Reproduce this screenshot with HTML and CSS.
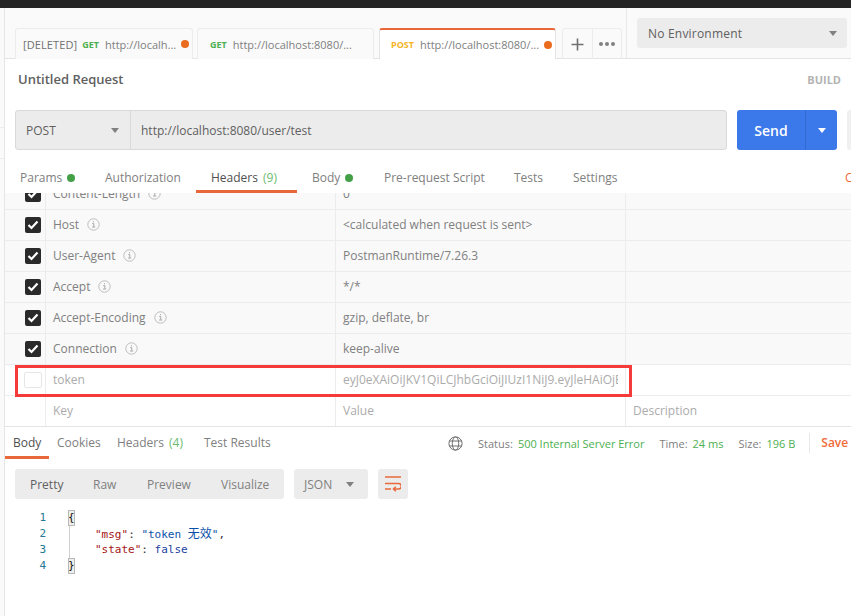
FILE: index.html
```html
<!DOCTYPE html>
<html lang="en">
<head>
<meta charset="utf-8">
<title>Postman</title>
<link rel="stylesheet" href="styles.css">
</head>
<body>
<div class="app">
  <div class="topbar"></div>
  <div class="workspace">
    <aside class="rail"><i class="rail-line one"></i><i class="rail-line two"></i></aside>
    <main class="main">
      <header class="tabstrip">
        <div class="tabs">
          <div class="tab t1"><span class="deleted">[DELETED]</span><b class="get">GET</b><span class="turl">http://localh...</span><i class="dot"></i></div>
          <div class="tab t2"><b class="get">GET</b><span class="turl">http://localhost:8080/...</span></div>
          <div class="tab t3 active"><b class="post">POST</b><span class="turl">http://localhost:8080/...</span><i class="dot"></i></div>
          <div class="tabtools">
            <div class="tool plus"><svg width="13" height="13" viewBox="0 0 13 13"><path d="M6.500 0.500v12M0.500 6.500h12" stroke="#707070" stroke-width="1.600" fill="none"/></svg></div>
            <div class="tool more"><i></i><i></i><i></i></div>
          </div>
        </div>
        <div class="envwrap">
          <div class="env"><span>No Environment</span><i class="caret"></i></div>
        </div>
      </header>

      <div class="titlerow"><span class="rtitle">Untitled Request</span><span class="build">BUILD</span></div>

      <div class="urlrow">
        <div class="urlbox">
          <div class="method"><span>POST</span><i class="caret"></i></div>
          <div class="url">http://localhost:8080/user/test</div>
        </div>
        <div class="send"><span class="sendlabel">Send</span><span class="sendmenu"><i class="caret white"></i></span></div>
        <div class="savestub"></div>
      </div>

      <nav class="reqtabs">
        <span class="rt r1">Params<i class="gdot"></i></span>
        <span class="rt r2">Authorization</span>
        <span class="rt r3 on">Headers <em>(9)</em></span>
        <span class="rt r4">Body<i class="gdot"></i></span>
        <span class="rt r5">Pre-request Script</span>
        <span class="rt r6">Tests</span>
        <span class="rt r7">Settings</span>
        <span class="rt r8">Cookies</span>
      </nav>

      <section class="tablewrap">
        <div class="table">
          <div class="row"><div class="c ck"><i class="box on"><svg width="12" height="10" viewBox="0 0 12 10"><path d="M1.500 5l3 3 6-6.500" stroke="#fff" stroke-width="2.200" fill="none"/></svg></i></div><div class="c key">Content-Length<svg class="info" width="13" height="13" viewBox="0 0 13 13"><circle cx="6.500" cy="6.500" r="5.700" fill="none" stroke="#bdbdbd"/><path d="M5.200 5.600h1.600v3.200M5 9h3.200M6.500 3.200v1.100" fill="none" stroke="#a8a8a8"/></svg></div><div class="c val">0</div><div class="c desc"></div></div>
          <div class="row"><div class="c ck"><i class="box on"><svg width="12" height="10" viewBox="0 0 12 10"><path d="M1.500 5l3 3 6-6.500" stroke="#fff" stroke-width="2.200" fill="none"/></svg></i></div><div class="c key">Host<svg class="info" width="13" height="13" viewBox="0 0 13 13"><circle cx="6.500" cy="6.500" r="5.700" fill="none" stroke="#bdbdbd"/><path d="M5.200 5.600h1.600v3.200M5 9h3.200M6.500 3.200v1.100" fill="none" stroke="#a8a8a8"/></svg></div><div class="c val">&lt;calculated when request is sent&gt;</div><div class="c desc"></div></div>
          <div class="row"><div class="c ck"><i class="box on"><svg width="12" height="10" viewBox="0 0 12 10"><path d="M1.500 5l3 3 6-6.500" stroke="#fff" stroke-width="2.200" fill="none"/></svg></i></div><div class="c key">User-Agent<svg class="info" width="13" height="13" viewBox="0 0 13 13"><circle cx="6.500" cy="6.500" r="5.700" fill="none" stroke="#bdbdbd"/><path d="M5.200 5.600h1.600v3.200M5 9h3.200M6.500 3.200v1.100" fill="none" stroke="#a8a8a8"/></svg></div><div class="c val">PostmanRuntime/7.26.3</div><div class="c desc"></div></div>
          <div class="row"><div class="c ck"><i class="box on"><svg width="12" height="10" viewBox="0 0 12 10"><path d="M1.500 5l3 3 6-6.500" stroke="#fff" stroke-width="2.200" fill="none"/></svg></i></div><div class="c key">Accept<svg class="info" width="13" height="13" viewBox="0 0 13 13"><circle cx="6.500" cy="6.500" r="5.700" fill="none" stroke="#bdbdbd"/><path d="M5.200 5.600h1.600v3.200M5 9h3.200M6.500 3.200v1.100" fill="none" stroke="#a8a8a8"/></svg></div><div class="c val">*/*</div><div class="c desc"></div></div>
          <div class="row"><div class="c ck"><i class="box on"><svg width="12" height="10" viewBox="0 0 12 10"><path d="M1.500 5l3 3 6-6.500" stroke="#fff" stroke-width="2.200" fill="none"/></svg></i></div><div class="c key">Accept-Encoding<svg class="info" width="13" height="13" viewBox="0 0 13 13"><circle cx="6.500" cy="6.500" r="5.700" fill="none" stroke="#bdbdbd"/><path d="M5.200 5.600h1.600v3.200M5 9h3.200M6.500 3.200v1.100" fill="none" stroke="#a8a8a8"/></svg></div><div class="c val">gzip, deflate, br</div><div class="c desc"></div></div>
          <div class="row"><div class="c ck"><i class="box on"><svg width="12" height="10" viewBox="0 0 12 10"><path d="M1.500 5l3 3 6-6.500" stroke="#fff" stroke-width="2.200" fill="none"/></svg></i></div><div class="c key">Connection<svg class="info" width="13" height="13" viewBox="0 0 13 13"><circle cx="6.500" cy="6.500" r="5.700" fill="none" stroke="#bdbdbd"/><path d="M5.200 5.600h1.600v3.200M5 9h3.200M6.500 3.200v1.100" fill="none" stroke="#a8a8a8"/></svg></div><div class="c val">keep-alive</div><div class="c desc"></div></div>
          <div class="row off"><div class="c ck"><i class="box"></i></div><div class="c key">token</div><div class="c val"><span class="clip">eyJ0eXAiOiJKV1QiLCJhbGciOiJIUzI1NiJ9.eyJleHAiOjE2MDA</span></div><div class="c desc"></div></div>
          <div class="row off"><div class="c ck"></div><div class="c key">Key</div><div class="c val">Value</div><div class="c desc">Description</div></div>
        </div>
        <div class="redbox"></div>
      </section>

      <div class="resbar">
        <nav class="restabs">
          <span class="st s1 on">Body</span>
          <span class="st s2">Cookies</span>
          <span class="st s3">Headers <em>(4)</em></span>
          <span class="st s4">Test Results</span>
        </nav>
        <div class="meta">
          <svg class="globe" width="15" height="15" viewBox="0 0 15 15"><g fill="none" stroke="#707070"><circle cx="7.500" cy="7.500" r="6.600"/><ellipse cx="7.500" cy="7.500" rx="3.200" ry="6.600"/><path d="M1.300 5h12.400M1.300 10h12.400"/></g></svg>
          <span class="ml st1">Status:</span><span class="mv">500 Internal Server Error</span>
          <span class="ml st2">Time:</span><span class="mv">24 ms</span>
          <span class="ml st3">Size:</span><span class="mv">196 B</span>
          <span class="save">Save</span>
        </div>
      </div>

      <div class="restools">
        <div class="modes"><span class="m1 cur">Pretty</span><span class="m2">Raw</span><span class="m3">Preview</span><span class="m4">Visualize</span></div>
        <div class="lang"><span>JSON</span><i class="caret"></i></div>
        <div class="wrapbtn"><svg width="16" height="16" viewBox="0 0 16 16"><g fill="none" stroke="#e8683a" stroke-width="1.500"><path d="M0 1h16M0 7.500h13.500a2.300 2.300 0 0 1 0 5.500H8.500"/><path d="M0 13h6M10.800 10.800L8.500 13l2.300 2.300"/></g></svg></div>
      </div>

      <div class="code">
        <div class="gutter"><span>1</span><span>2</span><span>3</span><span>4</span></div>
        <div class="lines">
          <div class="ln"><span class="br">{</span></div>
          <div class="ln in"><span class="k">"msg"</span>: <span class="s">"token <span class="cjk">无效</span>"</span>,</div>
          <div class="ln in"><span class="k">"state"</span>: <span class="b">false</span></div>
          <div class="ln"><span class="br">}</span></div>
        </div>
      </div>
    </main>
  </div>
</div>
</body>
</html>
```

FILE: styles.css
```css
* { box-sizing: border-box; }
html, body { margin: 0; height: 100%; overflow: hidden; background: #fff; }
body { font-family: "Open Sans", "Noto Sans CJK SC", sans-serif; font-size: 12px; color: #808080; }
i, em { font-style: normal; }
.app { width: 851px; height: 616px; display: flex; flex-direction: column; overflow: hidden; }
.topbar { height: 8px; background: #242424; flex: none; }
.workspace { flex: 1; display: flex; min-height: 0; }
.rail { width: 5px; flex: none; border-right: 1px solid #e6e6e6; background: #fafafa; position: relative; }
.rail-line { position: absolute; left: 0; width: 4px; height: 1px; background: #ececec; }
.rail-line.one { top: 119px; }
.rail-line.two { top: 150px; }
.main { width: 846px; flex: none; min-width: 0; overflow: hidden; }

.tabstrip { height: 51px; background: #fafafa; border-bottom: 1px solid #e4e4e4; display: flex; }
.tabs { width: 621px; flex: none; padding: 20px 0 0 10px; display: flex; align-items: flex-start; }
.tab { height: 31px; background: #fafafa; border: 1px solid #ececec; border-bottom: 0; border-radius: 3px 3px 0 0; display: flex; align-items: center; white-space: nowrap; font-size: 11px; flex: none; }
.t1 { width: 178px; padding-left: 7px; }
.t2 { width: 177px; margin-left: 4px; padding-left: 12px; }
.t3 { width: 177px; margin-left: 5px; padding-left: 11px; background: #fff; border-color: #e4e4e4; border-top: 2px solid #e8683a; position: relative; }
.deleted { color: #707070; letter-spacing: .1px; }
.tab b { font-size: 9px; font-weight: 700; margin: 0 6px 0 5px; }
.t2 b, .t3 b { margin-left: 0; }
.get { color: #4caf50; }
.post { color: #f5b324; }
.turl { color: #808080; }
.dot { width: 8px; height: 8px; border-radius: 50%; background: #ea6d1f; margin-left: 5px; }
.tabtools { display: flex; margin-left: 6px; height: 31px; width: 60px; border: 1px solid #ececec; border-bottom: 0; border-radius: 3px 3px 0 0; }
.tool { flex: 1; display: flex; align-items: center; justify-content: center; gap: 2px; }
.plus { border-right: 1px solid #ececec; flex: none; width: 30px; }
.more i { width: 4px; height: 4px; border-radius: 50%; background: #808080; }
.envwrap { flex: 1; border-left: 1px solid #e8e8e8; padding: 10px 0 0 10px; }
.env { width: 210px; height: 30px; background: #ececec; border-radius: 3px; display: flex; align-items: center; justify-content: space-between; padding: 0 10px 0 11px; color: #606060; font-size: 12px; letter-spacing: .2px; }
.env span { font-weight: 500; }
.caret { width: 0; height: 0; border-left: 4px solid transparent; border-right: 4px solid transparent; border-top: 5px solid #808080; display: block; flex: none; }
.caret.white { border-top-color: #fff; }

.titlerow { height: 51px; display: flex; justify-content: space-between; align-items: flex-start; padding: 10px 10px 0 13px; }
.rtitle { font-size: 13px; font-weight: 600; color: #606060; line-height: 20px; }
.build { font-size: 11px; font-weight: 700; color: #b3b3b3; line-height: 22px; }

.urlrow { display: flex; padding-left: 10px; height: 40px; }
.urlbox { width: 712px; flex: none; height: 40px; background: #ececec; border: 1px solid #d9d9d9; border-radius: 3px; display: flex; align-items: center; color: #606060; }
.method { width: 115px; height: 38px; border-right: 1px solid #d9d9d9; display: flex; align-items: center; justify-content: space-between; padding: 0 11px 0 10px; font-size: 12px; font-weight: 500; }
.url { padding-left: 10px; font-size: 12px; }
.send { width: 100px; flex: none; margin-left: 10px; background: #3b78ea; border-radius: 3px; color: #fff; display: flex; font-weight: 600; font-size: 14px; }
.sendlabel { width: 69px; display: flex; align-items: center; justify-content: center; border-right: 1px solid #336bd2; }
.sendmenu { flex: 1; display: flex; align-items: center; justify-content: center; }
.savestub { width: 20px; flex: none; margin-left: 10px; background: #f0f0f0; border-radius: 3px 0 0 3px; }

.reqtabs { height: 43px; position: relative; white-space: nowrap; }
.rt { position: absolute; top: 19px; line-height: 18px; display: flex; align-items: center; }
.r1 { left: 15px; } .r2 { left: 100px; } .r3 { left: 206px; color: #505050; white-space: pre; } .r4 { left: 307px; }
.r5 { left: 379px; } .r6 { left: 509px; } .r7 { left: 568px; } .r8 { left: 840px; color: #f26b3a; }
.rt em, .st em { color: #6cbb70; margin-left: 2px; }
.gdot { width: 8px; height: 8px; border-radius: 50%; background: #43a047; margin-left: 5px; }
.r3::after { content: ""; position: absolute; left: -15px; width: 101px; height: 3px; bottom: -6px; background: #e8683a; }

.tablewrap { height: 234px; overflow: hidden; position: relative; background: #fff; }
.table { margin-top: -14px; border-bottom: 1px solid #e4e4e4; }
.row { height: 31px; display: grid; grid-template-columns: 41px 290px 290px 1fr; background: #f9f9f9; border-bottom: 1px solid #ececec; color: #808080; }
.row.off { background: #fff; color: #ababab; }
.row:last-child { border-bottom: 0; height: 30px; }
.c { display: flex; align-items: center; padding: 0 0 2px 7px; border-right: 1px solid #ececec; min-width: 0; white-space: nowrap; }
.ck { padding: 0 0 0 20px; }
.desc { border-right: 0; }
.box { width: 16px; height: 16px; border-radius: 2px; background: #2a2a2a; display: flex; align-items: center; justify-content: center; }
.row.off .box { background: #fff; border: 1px solid #e6e6e6; width: 18px; height: 16px; margin-left: -1px; }
.info { margin-left: 8px; }
.clip { overflow: hidden; width: 275px; display: block; }
.redbox { position: absolute; left: 10px; top: 172px; width: 617px; height: 32px; border: 3px solid #f53a3a; pointer-events: none; }

.resbar { height: 32px; display: flex; position: relative; }
.restabs { width: 440px; position: relative; }
.st { position: absolute; top: 7px; line-height: 18px; white-space: pre; }
.s1 { left: 8px; color: #505050; }
.s1::after { content: ""; position: absolute; left: -8px; bottom: -7px; height: 3px; width: 44px; background: #e8683a; }
.s2 { left: 52px; } .s3 { left: 112px; } .s4 { left: 199px; }
.meta { flex: 1; display: flex; align-items: center; font-size: 11px; color: #808080; white-space: nowrap; padding-left: 3px; }
.globe { flex: none; margin-right: 15px; }
.mv { color: #4caf50; margin-left: 5px; }
.st2 { margin-left: 15px; } .st3 { margin-left: 15px; }
.save { margin-left: 14px; padding-left: 11px; border-left: 1px solid #e8e8e8; color: #f26b3a; font-weight: 600; font-size: 12px; line-height: 20px; }

.restools { display: flex; padding: 10px 0 0 10px; height: 40px; }
.modes { width: 269px; height: 30px; background: #ececec; border-radius: 3px; position: relative; }
.modes span { position: absolute; top: 7px; line-height: 18px; }
.m1 { left: 15px; color: #606060; } .m2 { left: 78px; } .m3 { left: 132px; } .m4 { left: 206px; }
.lang { width: 74px; height: 30px; margin-left: 10px; background: #ececec; border-radius: 3px; display: flex; align-items: center; justify-content: space-between; padding: 0 14px 0 10px; }
.wrapbtn { width: 30px; height: 30px; margin-left: 10px; background: #ececec; border-radius: 3px; display: flex; align-items: center; justify-content: center; }

.code { display: flex; padding-top: 11px; font-family: "DejaVu Sans Mono", "Noto Sans CJK SC", monospace; font-size: 11px; line-height: 16px; }
.gutter { width: 38px; text-align: right; color: #237893; flex: none; margin-left: 3px; }
.gutter span { display: block; }
.lines { margin-left: 22px; position: relative; color: #333; }
.lines::before { content: ""; position: absolute; left: 1px; top: 16px; bottom: 16px; width: 1px; background: #cfcfcf; }
.ln { height: 16px; white-space: pre; }
.ln.in { padding-left: 27px; }
.br { display: inline-block; background: #eeeeea; outline: 1px solid #b8b8b8; outline-offset: -1px; width: 7px; color: #111; line-height: 16px; }
.k { color: #a31515; }
.s { color: #0b50a8; }
.cjk { font-size: 12px; }
.b { color: #1b3fa0; }
```
